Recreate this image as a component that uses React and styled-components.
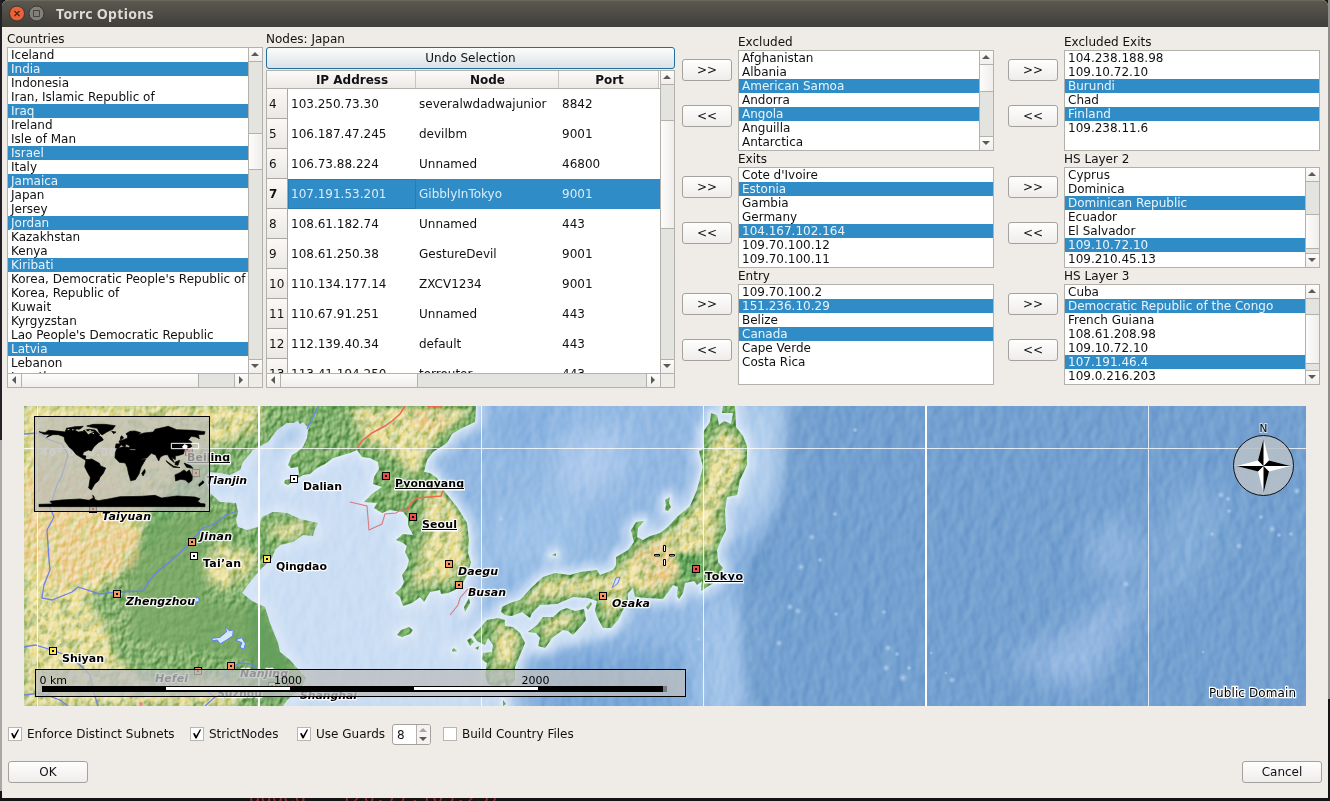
import React from "react";
import styled, { createGlobalStyle, css } from "styled-components";

const Global = createGlobalStyle`
  * { box-sizing: border-box; }
  body { margin: 0; overflow: hidden; background: #17151a; }
`;

const LINE = "#b3b1ac";

const Desktop = styled.div`
  width: 1330px;
  height: 801px;
  overflow: hidden;
  padding: 0 2px;
  font: 12px/14px "DejaVu Sans", sans-serif;
  color: #111;
  background:
    linear-gradient(90deg, #232126 2px, transparent 2px) 0 0 / 1330px 440px no-repeat,
    linear-gradient(90deg, #a8a7a5 2px, transparent 2px, transparent 1328px, #8d8f8b 1328px) 0 0 / 1330px 699px no-repeat,
    linear-gradient(90deg, #a8a7a5 2px, transparent 2px) 0 0 / 1330px 791px no-repeat,
    #151316;
`;

const Window = styled.main`
  height: 798px;
  display: flex;
  flex-direction: column;
  background: #efebe7;
  border-radius: 6px 6px 0 0;
  overflow: hidden;
`;

const Behind = styled.div`
  height: 20px;
  margin: -12px 0 0 247px;
  font: 19px/20px "DejaVu Sans Mono", monospace;
  color: #8e2f2f;
  white-space: pre;
  clip-path: inset(12px 0 0 0);
`;

const TitleBar = styled.header`
  flex: none;
  height: 27px;
  padding-left: 7px;
  display: flex;
  align-items: center;
  gap: 3px;
  background: linear-gradient(#5b5850, #3f3e39);
  border-top: 1px solid #6a675d;
  color: #dfdbd2;
  font: bold 14px/26px "Noto Sans", "Open Sans", sans-serif;
`;

const Title = styled.span`
  padding-left: 8px;
  letter-spacing: 0.3px;
`;

const Top = styled.section`
  flex: none;
  height: 379px;
  padding-left: 5px;
  display: flex;
  align-items: flex-start;
`;

const Column = styled.div`
  width: ${(p) => p.$w}px;
  padding-top: ${(p) => p.$top || 4}px;
  margin-right: ${(p) => p.$gap || 0}px;
  flex: none;
`;

const Label = styled.div`
  height: 16px;
  line-height: 16px;
  white-space: pre;
`;

const Frame = styled.div`
  height: ${(p) => p.$h}px;
  margin-top: ${(p) => p.$mt || 0}px;
  border: 1px solid ${LINE};
  background: #fff;
  display: grid;
  grid-template-columns: minmax(0, 1fr) auto;
  grid-template-rows: minmax(0, 1fr) auto;
  overflow: hidden;
`;

const Items = styled.ul`
  margin: 0;
  padding: 0;
  list-style: none;
  overflow: hidden;
`;

const Item = styled.li`
  height: 14px;
  padding-left: 3px;
  white-space: nowrap;
  ${(p) => p.$on && css`background: #308cc6; color: #e9f3fa;`}
`;

const Bar = styled.div`
  display: flex;
  flex-direction: ${(p) => (p.$h ? "row" : "column")};
  background: #e3e3e0;
  ${(p) => (p.$h
    ? css`height: 14px; border-top: 1px solid ${LINE};`
    : css`width: 14px; border-left: 1px solid ${LINE};`)}
`;

const End = styled.div`
  flex: none;
  width: 13px;
  height: 13px;
  padding: 0 1px 1px 0;
  display: grid;
  place-items: center;
  background: linear-gradient(#fdfcfb, #f1efed);
`;

const Space = styled.div`
  flex: ${(p) => (p.$len === undefined ? "1" : `0 0 ${p.$len}px`)};
`;

const Thumb = styled.div`
  flex: 0 0 ${(p) => p.$len}px;
  background: linear-gradient(${(p) => (p.$h ? "180deg" : "90deg")}, #fdfcfb, #f0eeec);
`;

const Edge = styled.div`
  flex: 0 0 1px;
  background: ${LINE};
`;

const Corner = styled.div`
  border: solid ${LINE};
  border-width: 1px 0 0 1px;
  background: #efebe7;
`;

const Arrow = styled.i`
  width: 0;
  height: 0;
  border: 4px solid transparent;
  ${(p) => ({
    up: css`border-bottom: 4px solid #5c5a57; border-top-width: 0;`,
    down: css`border-top: 4px solid #5c5a57; border-bottom-width: 0;`,
    left: css`border-right: 4px solid #5c5a57; border-left-width: 0;`,
    right: css`border-left: 4px solid #5c5a57; border-right-width: 0;`,
  })[p.$d]}
  ${(p) => p.$faded && css`opacity: 0.5;`}
`;

const Button = styled.button`
  display: block;
  width: ${(p) => p.$w}px;
  height: 22px;
  padding: 0;
  border: 1px solid #a5a29e;
  border-radius: 3px;
  background: linear-gradient(#fefefe, #efedeb);
  color: #111;
  font: 12px/18px "DejaVu Sans", sans-serif;
  ${(p) => p.$focus && css`
    border-color: #216f9e;
    background: linear-gradient(#fbfdfd, #dbe1e4);
  `}
`;

const Movers = styled.div`
  display: flex;
  flex-direction: column;
  gap: 24px;
  margin-bottom: 49px;
`;

const Table = styled.div`
  min-width: 0;
  overflow: hidden;
  display: grid;
  grid-template-columns: 21px 128px 143px 101px;
  grid-template-rows: 18px;
  grid-auto-rows: 30px;
`;

const Head = styled.div`
  display: flex;
  justify-content: center;
  font-weight: bold;
  line-height: 18px;
  border-bottom: 1px solid ${LINE};
  background: linear-gradient(#fdfbfa, #ebe8e5);
  ${(p) => p.$sep && css`box-shadow: inset -1px 0 #c9c6c2;`}
  ${(p) => p.$last && css`box-shadow: inset -1px 0 #fff, inset -2px 0 #c9c6c2;`}
`;

const RowHead = styled.div`
  padding-left: 2px;
  line-height: 30px;
  border: solid #aaa8a4;
  border-width: 0 1px 1px 0;
  background: linear-gradient(#fbf8f6, #eae8e5);
  font-weight: ${(p) => (p.$on ? "bold" : "normal")};
`;

const Cell = styled.div`
  padding-left: 3px;
  line-height: 30px;
  white-space: nowrap;
  ${(p) => p.$on && css`background: #308cc6; color: #d9ecf8;`}
  ${(p) => p.$current && css`box-shadow: inset 0 0 0 1px #2a7cb0;`}
`;

const MapSvg = styled.svg`
  flex: none;
  display: block;
  width: 1282px;
  height: 300px;
  margin-left: 22px;
  font-family: "DejaVu Sans", sans-serif;
`;

const Blended = styled.g`
  mix-blend-mode: ${(p) => p.$mode};
  opacity: ${(p) => p.$amount};
`;

const Options = styled.section`
  display: flex;
  align-items: center;
  height: 21px;
  margin: 18px 0 0 6px;
`;

const Check = styled.label`
  display: flex;
  align-items: center;
  gap: 5px;
  width: ${(p) => p.$w}px;
  margin-bottom: 1px;
  white-space: nowrap;
`;

const Box = styled.span`
  flex: none;
  width: 14px;
  height: 14px;
  border: 1px solid #b9b6b2;
  background: #fff;
  display: grid;
  place-items: center;
`;

const Spin = styled.div`
  width: 39px;
  height: 21px;
  margin-right: 12px;
  border: 1px solid #a5a29e;
  border-radius: 3px;
  background: #fff;
  overflow: hidden;
  display: flex;
  line-height: 20px;
`;

const SpinValue = styled.span`
  width: 24px;
  padding-left: 4px;
  border-right: 1px solid ${LINE};
`;

const SpinSteps = styled.span`
  flex: 1;
  display: flex;
  flex-direction: column;
  align-items: center;
  justify-content: center;
  gap: 5px;
  padding-right: 1px;
  background: #f5f3f1;
`;

const Footer = styled.footer`
  display: flex;
  justify-content: space-between;
  margin: 16px 6px 0;
`;

function Scroll({ h, before, thumb }) {
  return (
    <Bar $h={h}>
      <End><Arrow $d={h ? "left" : "up"} /></End>
      <Edge />
      {before > 0 && <><Space $len={before} /><Edge /></>}
      <Thumb $h={h} $len={thumb} />
      <Edge />
      <Space />
      <Edge />
      <End><Arrow $d={h ? "right" : "down"} /></End>
    </Bar>
  );
}

function List({ items, on, h = 101, v, hbar }) {
  return (
    <Frame $h={h}>
      <Items>
        {items.map((t, i) => <Item key={i} $on={on.includes(i)}>{t}</Item>)}
      </Items>
      {v ? <Scroll before={v[0]} thumb={v[1]} /> : <span />}
      {hbar && <><Scroll h before={hbar[0]} thumb={hbar[1]} /><Corner /></>}
    </Frame>
  );
}

const countries = [
  "Iceland", "India", "Indonesia", "Iran, Islamic Republic of", "Iraq", "Ireland",
  "Isle of Man", "Israel", "Italy", "Jamaica", "Japan", "Jersey", "Jordan", "Kazakhstan",
  "Kenya", "Kiribati", "Korea, Democratic People's Republic of", "Korea, Republic of",
  "Kuwait", "Kyrgyzstan", "Lao People's Democratic Republic", "Latvia", "Lebanon", "Lesotho",
];

const nodes = [
  [4, "103.250.73.30", "severalwdadwajunior", "8842"],
  [5, "106.187.47.245", "devilbm", "9001"],
  [6, "106.73.88.224", "Unnamed", "46800"],
  [7, "107.191.53.201", "GibblyInTokyo", "9001"],
  [8, "108.61.182.74", "Unnamed", "443"],
  [9, "108.61.250.38", "GestureDevil", "9001"],
  [10, "110.134.177.14", "ZXCV1234", "9001"],
  [11, "110.67.91.251", "Unnamed", "443"],
  [12, "112.139.40.34", "default", "443"],
  [13, "113.41.194.250", "torrouter", "443"],
];

const leftLists = [
  ["Excluded", ["Afghanistan", "Albania", "American Samoa", "Andorra", "Angola", "Anguilla", "Antarctica"], [2, 4], [0, 26]],
  ["Exits", ["Cote d'Ivoire", "Estonia", "Gambia", "Germany", "104.167.102.164", "109.70.100.12", "109.70.100.11"], [1, 4]],
  ["Entry", ["109.70.100.2", "151.236.10.29", "Belize", "Canada", "Cape Verde", "Costa Rica"], [1, 3]],
];

const rightLists = [
  ["Excluded Exits", ["104.238.188.98", "109.10.72.10", "Burundi", "Chad", "Finland", "109.238.11.6"], [2, 4]],
  ["HS Layer 2", ["Cyprus", "Dominica", "Dominican Republic", "Ecuador", "El Salvador", "109.10.72.10", "109.210.45.13"], [2, 5], [32, 33]],
  ["HS Layer 3", ["Cuba", "Democratic Republic of the Congo", "French Guiana", "108.61.208.98", "109.10.72.10", "107.191.46.4", "109.0.216.203"], [1, 5], [15, 48]],
];

function MoverColumn({ gap }) {
  return (
    <Column $w={50} $top={32} $gap={gap}>
      {[0, 1, 2].map((i) => (
        <Movers key={i}>
          <Button $w={50}>&gt;&gt;</Button>
          <Button $w={50}>&lt;&lt;</Button>
        </Movers>
      ))}
    </Column>
  );
}

function ListColumn({ lists, gap }) {
  return (
    <Column $w={256} $top={7} $gap={gap}>
      {lists.map(([name, items, on, v]) => (
        <React.Fragment key={name}>
          <Label>{name}</Label>
          <List items={items} on={on} v={v} />
        </React.Fragment>
      ))}
    </Column>
  );
}

const CHINA = "M24,406L320,406L316,418L308,430L307,438L303,447L297,452L292,455L288,465L291,468L298,467L299,474L296,478L285,480L284,483L288,485L295,480L303,475L310,474L317,468L325,464L333,458L350,453L357,450L362,457L370,458L378,462L379,469L374,477L373,484L382,487L372,494L364,502L377,503L374,508L382,513L390,510L403,512L408,518L408,525L413,535L403,534L396,540L403,543L407,546L405,552L409,560L407,568L402,575L404,582L401,588L395,593L400,597L403,606L412,603L420,597L424,602L430,592L440,590L441,594L448,593L455,590L463,583L468,573L471,562L468,553L469,540L467,523L457,507L445,492L437,478L430,473L424,472L427,460L433,452L447,443L452,434L462,428L475,422L476,406Z";
const BOHAI = "M318,406L308,430L307,438L303,447L297,452L292,455L288,465L291,468L298,467L299,474L296,478L285,480L284,483L288,485L295,480L303,475L310,474L317,468L325,464L333,458L350,453L357,450L362,457L370,458L378,462L379,469L374,477L373,484L382,487L372,494L364,502L377,503L374,508L382,513L390,510L403,512L408,518L408,525L413,535L403,534L396,540L403,543L407,546L405,552L409,560L407,568L402,575L404,582L401,588L395,593L400,597L403,606L412,603L420,597L424,602L430,592L440,590L441,594L448,593L455,590L463,583L468,573L471,562L468,553L469,540L467,523L457,507L445,492L437,478L430,473L424,472L427,460L433,452L447,443L452,434L462,428L475,422L476,406Z";
const MAINLAND = "M24,406L318,406L308,428L303,422L300,424L298,421L293,423L287,423L277,430L268,442L253,450L243,462L240,470L230,475L220,473L208,472L205,480L210,493L220,502L236,503L238,512L236,520L238,527L247,530L258,527L262,517L273,512L287,513L300,519L318,523L315,529L313,536L303,535L293,542L280,545L275,550L272,558L260,570L250,582L242,593L252,601L265,607L270,623L278,643L280,652L290,660L297,668L306,678L300,690L287,700L283,706L24,706Z";
const HONSHU = "M502,607L510,603L520,600L532,587L543,577L555,573L570,575L580,572L597,570L600,575L613,570L616,565L616,557L628,550L634,542L631,530L636,522L644,521L638,528L637,537L643,540L650,536L660,533L668,527L677,517L690,506L697,490L703,467L699,451L704,449L703,432L710,422L711,413L717,415L719,425L724,421L731,424L733,413L722,413L723,406L735,406L736,427L743,436L747,446L747,465L740,480L737,495L727,497L725,510L726,530L721,540L717,550L718,562L723,568L715,582L701,591L702,581L697,585L694,581L685,583L683,593L679,599L677,596L678,587L673,585L663,599L647,598L635,597L633,588L628,593L628,600L623,610L618,620L611,628L603,628L597,617L595,610L597,601L588,598L573,597L557,604L540,605L532,613L530,618L522,612L512,616L505,615L501,612Z";
const ISLANDS = "M528,632L537,625L543,617L553,617L561,610L567,608L575,611L584,609L586,620L582,625L573,635L568,631L563,630L553,637L545,648L538,646L540,638L536,633ZM473,635L480,628L487,620L498,618L505,620L505,626L513,627L520,633L525,643L520,655L515,667L515,680L507,690L505,682L497,688L488,684L485,675L487,663L482,660L483,653L492,652L493,645L488,638L485,645L477,641ZM397,635L401,630L409,627L413,630L410,634L402,637ZM465,612L464,607L469,598L470,603ZM665,510L666,505L665,500L670,497L669,503L671,507L668,511ZM586,607L591,602L592,604L588,610ZM452,650L454,648L457,651L453,652ZM467,640L471,638L474,642L470,646ZM475,648L479,646L478,650ZM503,706L503,700L506,704ZM552,555L556,553L556,556Z";
const RIDGES = "M24,406L262,406L255,430L225,442L200,450L150,510L135,550L118,575L85,600L105,625L115,660L150,685L220,680L245,690L230,706L24,706ZM395,406L470,406L465,415L440,432L425,450L418,475L410,470L390,450L365,440L350,406ZM430,485L445,495L460,515L465,540L466,570L445,580L415,585L420,560L430,530L425,510ZM265,530L300,523L310,527L285,538ZM215,545L258,555L245,575L220,590L200,570ZM512,607L550,580L600,577L620,565L650,545L675,530L700,500L712,450L720,430L735,435L743,455L735,480L720,500L715,530L712,545L690,555L685,565L660,590L630,590L610,620L600,590L540,598ZM500,622L520,635L510,665L500,675L495,640ZM545,620L582,612L565,627L545,640Z";

const WORLD = "M57,95L75,98L85,91L120,94L135,96L140,85L160,88L175,96L195,93L205,104L222,95L245,112L250,120L235,128L222,140L214,153L205,150L190,157L188,166L198,168L196,177L206,181L202,184L186,174L168,163L158,150L148,142L135,124L132,110L115,104L98,104L80,112L90,103L72,103ZM140,85L165,80L190,79L180,87L160,90ZM190,92L205,88L225,90L240,104L228,102L222,93ZM200,78L220,73L255,73L286,77L278,88L262,95L246,105L238,98L232,85L215,82ZM275,94L288,96L281,101ZM198,180L215,177L238,190L242,198L257,204L250,220L240,232L236,242L224,252L214,270L206,264L211,232L203,218L194,200ZM290,147L307,141L325,142L330,150L350,151L362,177L377,178L363,202L357,222L346,239L332,242L326,222L322,203L316,189L298,187L285,173L286,158ZM374,208L376,216L369,228L365,220ZM286,144L288,132L300,131L297,123L310,119L322,115L323,108L318,101L330,94L345,93L362,98L355,104L372,99L400,96L405,88L445,79L470,89L520,91L555,95L553,103L535,104L538,116L528,111L514,109L505,119L516,127L505,138L495,140L493,152L490,162L477,166L466,168L466,179L455,172L463,188L450,177L443,164L432,165L421,171L416,183L407,165L394,160L380,174L360,178L350,156L346,147L325,146L330,138L318,132L315,142L303,134L296,145ZM305,107L311,114L301,120L302,111ZM508,128L516,139L500,149L505,139ZM438,182L460,198L480,203L460,202L443,189ZM466,186L479,181L474,196L465,194ZM492,189L512,197L519,205L500,202ZM465,225L480,218L492,210L500,216L508,210L517,230L516,241L506,249L496,240L482,238L467,243ZM549,242L552,248L538,259L536,254ZM57,320L57,313L97,312L90,304L125,300L180,297L207,301L220,294L218,286L221,288L225,299L235,302L265,297L300,290L365,289L405,286L425,294L470,288L525,291L540,296L533,304L541,310L555,312L555,320Z";

const cities = [
  [189, 452, "Beijing", 187, 461, 43, "", "#ec4d4d", 1],
  [196, 473, "Tianjin", 206, 484, 41, "i", "#ef905e"],
  [93, 509, "Taiyuan", 102, 520, 49, "i", "#ef905e"],
  [294, 479, "Dalian", 303, 490, 39, "", "#fff"],
  [192, 542, "Jinan", 200, 540, 32, "i", "#fa9560"],
  [194, 556, "Tai’an", 203, 567, 38, "", "#fff"],
  [267, 559, "Qingdao", 276, 570, 51, "", "#ffe45a"],
  [117, 594, "Zhengzhou", 126, 605, 69, "i", "#fa9560"],
  [53, 651, "Shiyan", 62, 662, 42, "", "#ffe45a"],
  [198, 671, "Hefei", 155, 682, 33, "i", "#ef905e"],
  [231, 666, "Nanjing", 240, 677, 48, "i", "#fa9560"],
  [272, 686, "Suzhou", 217, 697, 45, "", "#ffe45a"],
  [291, 687, "Shanghai", 300, 699, 57, "i", "#ec4d4d"],
  [386, 476, "Pyongyang", 395, 487, 69, "", "#ec4d4d", 1],
  [413, 517, "Seoul", 422, 528, 35, "", "#ec4d4d", 1],
  [449, 564, "Daegu", 458, 575, 40, "i", "#fa9560"],
  [459, 585, "Busan", 468, 596, 38, "i", "#fa9560"],
  [603, 596, "Osaka", 612, 607, 38, "i", "#fa9560"],
  [696, 569, "Tokyo", 705, 580, 38, "", "#ec4d4d", 1],
];

const seamounts = [
  [790, 607, 4], [798, 611, 4], [835, 514, 3], [812, 537, 4], [801, 567, 4], [779, 643, 4], [836, 614, 3],
  [855, 430, 3], [884, 612, 3], [888, 648, 4], [897, 654, 3], [886, 668, 4], [903, 678, 5], [909, 668, 3],
  [931, 653, 2], [952, 680, 4], [946, 673, 2], [1126, 584, 4], [1221, 495, 4], [1228, 499, 3], [1229, 511, 3],
  [1212, 534, 3], [1239, 546, 4], [1261, 517, 3], [1272, 529, 4], [1279, 535, 3], [1291, 534, 3], [1297, 491, 4],
  [1203, 652, 2], [699, 639, 3], [501, 519, 4], [820, 560, 3],
];

function Marker({ x, y, fill }) {
  return (
    <g shapeRendering="crispEdges">
      <rect x={x - 4} y={y - 4} width="8" height="8" fill="#000" />
      <rect x={x - 3} y={y - 3} width="6" height="6" fill={fill} />
      <rect x={x - 1} y={y - 1} width="2" height="2" fill="#000" />
    </g>
  );
}

function City({ c: [x, y, name, tx, ty, w, style, fill, cap] }) {
  return (
    <g>
      <Marker x={x} y={y} fill={fill} />
      <text x={tx} y={ty} fontSize="11" fontWeight="bold" fontStyle={style ? "italic" : "normal"}
        textLength={w} stroke="#fff" strokeWidth="2.6" strokeOpacity="0.85" strokeLinejoin="round" paintOrder="stroke">
        {name}
      </text>
      {cap && <path d={`M${tx - 1},${ty + 2}h${w + 2}`} stroke="#fff" strokeWidth="3" />}
      {cap && <path d={`M${tx},${ty + 1.5}h${w}`} stroke="#000" strokeWidth="1" />}
    </g>
  );
}

function Atlas() {
  return (
    <MapSvg viewBox="24 406 1282 300">
      <defs>
        <filter id="b2"><feGaussianBlur stdDeviation="1.6" /></filter>
        <filter id="b5" x="-30%" y="-30%" width="160%" height="160%"><feGaussianBlur stdDeviation="5" /></filter>
        <filter id="b16" x="-50%" y="-50%" width="200%" height="200%"><feGaussianBlur stdDeviation="14" /></filter>
        <filter id="patchy" colorInterpolationFilters="sRGB">
          <feGaussianBlur in="SourceGraphic" stdDeviation="4" result="s" />
          <feTurbulence type="fractalNoise" baseFrequency="0.1" numOctaves="4" seed="9" />
          <feColorMatrix values="0 0 0 0 1  0 0 0 0 1  0 0 0 0 1  4 0 0 0 -1.3" result="n" />
          <feComposite in="s" in2="n" operator="in" />
        </filter>
        <filter id="relief" x="0" y="0" width="100%" height="100%" colorInterpolationFilters="sRGB">
          <feTurbulence type="fractalNoise" baseFrequency="0.17 0.13" numOctaves="2" seed="7" />
          <feDiffuseLighting surfaceScale="1.9" lightingColor="#fff"><feDistantLight azimuth="225" elevation="36" /></feDiffuseLighting>
        </filter>
        <filter id="seabed" x="0" y="0" width="100%" height="100%" colorInterpolationFilters="sRGB">
          <feTurbulence type="fractalNoise" baseFrequency="0.09 0.06" numOctaves="2" seed="3" />
          <feDiffuseLighting surfaceScale="1.1" lightingColor="#fff"><feDistantLight azimuth="200" elevation="30" /></feDiffuseLighting>
        </filter>
        <clipPath id="land"><path d={MAINLAND} /><path d={BOHAI} /><path d={HONSHU} /><path d={ISLANDS} /></clipPath>
        <clipPath id="shelf"><path d="M190,406H760V560L745,706H190Z" /></clipPath>
        <radialGradient id="mount"><stop offset="0" stopColor="#c5dcf3" stopOpacity="0.75" /><stop offset="1" stopColor="#a9c8e8" stopOpacity="0" /></radialGradient>
      </defs>

      <rect x="24" y="406" width="1282" height="300" fill="#73a0d0" />
      <g filter="url(#b16)">
        <path d="M200,380H790L785,450L790,500L765,540L740,560L750,620L745,730H200Z" fill="#93b9e3" />
        <path d="M200,440H400L480,590L470,620L520,730H200Z" fill="#cbdef4" />
        <path d="M735,400L790,400L785,480L760,520L730,545Z" fill="#b4d0ee" />
        <path d="M710,600L745,600L750,720H700Z" fill="#a5c6ea" />
        <path d="M545,650L680,650L690,720L530,720Z" fill="#78a6d8" />
        <path d="M490,410L560,400L550,440L500,455Z" fill="#86b0df" />
        <path d="M560,440L625,425L620,480L560,510Z" fill="#aecbed" />
        <path d="M490,520L570,500L590,540L530,570L490,570Z" fill="#9fc3e9" />
        <ellipse cx="1115" cy="550" rx="26" ry="30" fill="#91b5e0" />
        <path d="M1150,590L1085,690L1000,660L1060,640L1110,600Z" fill="#98bae3" />
        <path d="M1180,480L1230,500L1200,580L1150,610L1160,540Z" fill="#84add9" />
      </g>
      <path d="M797,406L793,470L785,510L760,560L748,600L752,660L760,706" fill="none" stroke="#5e8fc2" strokeWidth="11" opacity="0.55" filter="url(#b5)" />
      <g clipPath="url(#shelf)">
        <g fill="#dbe8f8" stroke="#dbe8f8" strokeWidth="15" strokeLinejoin="round" filter="url(#b5)" opacity="0.8">
          <path d={MAINLAND} /><path d={BOHAI} /><path d={HONSHU} /><path d={ISLANDS} />
        </g>
      </g>
      <path d="M490,610L530,620L600,598L625,622L600,640L530,655Z" fill="#d5e5f7" filter="url(#b5)" opacity="0.7" />
      <Blended $mode="overlay" $amount={0.3}>
        <rect x="24" y="406" width="1282" height="300" filter="url(#seabed)" />
      </Blended>
      {seamounts.map(([x, y, r], i) => <circle key={i} cx={x} cy={y} r={r} fill="url(#mount)" />)}
      <g fill="none" stroke="#f4f8fd" strokeWidth="3" opacity="0.6" filter="url(#b2)">
        <path d={HONSHU} /><path d={ISLANDS} /><path d={BOHAI} />
      </g>

      <g clipPath="url(#land)">
        <rect x="24" y="406" width="730" height="300" fill="#76a864" />
        <path d="M130,560L200,530L190,600L180,650L110,640Z" fill="#8bb06f" filter="url(#b16)" />
        <path d={RIDGES} fill="#b2c078" filter="url(#b5)" />
        <path d={RIDGES} fill="#ece09b" filter="url(#patchy)" />
        <path d="M24,406L120,406L130,500L140,550L118,570L60,590L24,580Z" fill="#e9de98" filter="url(#b5)" opacity="0.65" />
        <path d="M24,470L110,480L150,560L120,572L60,590L24,560ZM410,406L450,410L440,432L415,428ZM632,550L665,540L680,575L650,590Z" fill="#ecbf84" filter="url(#patchy)" opacity="0.6" />
        <path d="M225,450L180,500L140,560L150,520L200,460Z" fill="#5f9d5b" filter="url(#b5)" />
        <path d="M675,552L700,555L705,572L685,580L680,568Z" fill="#5c9b55" filter="url(#b2)" />
        <g fill="none" stroke="#5c994f" strokeWidth="5" filter="url(#b2)" opacity="0.8"><path d={HONSHU} /><path d={ISLANDS} /><path d={BOHAI} /></g>
        <Blended $mode="overlay" $amount={0.62}>
          <rect x="24" y="406" width="730" height="300" filter="url(#relief)" />
        </Blended>
        <path d="M150,520L230,512L205,550L205,600L268,612L290,670L200,650L130,640L130,580Z" fill="#76a663" filter="url(#b5)" opacity="0.75" />
        <path d="M250,590L300,680L260,706L250,650Z" fill="#629d5c" filter="url(#b5)" opacity="0.8" />
      </g>

      <g fill="none" stroke="#6b83e8" strokeWidth="1.3">
        <path d="M24,434L38,433L50,440L62,444L68,455L62,475L57,485L52,500L49,505L54,517L47,530L49,560L50,570L44,585L42,598L52,600L72,592L78,587L100,594L117,592L143,591L150,580L157,572L172,560L183,550L192,540L203,528L215,524L226,515L238,511" />
        <path d="M24,647L35,645L52,650L68,656L80,665L90,675L93,690L98,706M24,695L40,693L60,700L68,706" />
        <path d="M307,429L312,420L318,406M222,680L230,668L240,663L253,664L257,671M205,706L215,697L205,690" />
      </g>
      <g transform="translate(20 550) scale(.33333)" fill="#d5e7fa" stroke="#5b7ff0" strokeWidth="3">
        <path d="M575,265L600,262L620,245L615,230L628,242L640,240L638,258L620,270L600,282L592,270L578,272ZM645,270L665,263L676,280L672,298L660,292L666,278ZM525,145L535,142L538,152L528,158Z" />
      </g>
      <path d="M612,588L616,578L620,577L618,583Z" fill="#cfe0fa" stroke="#6b83e8" />
      <g fill="none" stroke="#d97a80" strokeWidth="1.1">
        <path d="M350,502L367,506L369,530L382,524L385,514L396,513L402,509L407,512M450,615L458,605L460,598L467,590L475,587" />
      </g>
      <g fill="none" stroke="#f2684c" strokeWidth="1.5">
        <path d="M407,512L411,503L417,498L441,496L443,490M357,448L362,441L372,433L385,426L392,421L400,414L405,406M427,406L442,407" />
      </g>

      <g fill="none" stroke="#fff" shapeRendering="crispEdges">
        <path d="M37.5,406V706M481.5,406V706M703.5,406V706M1148.5,406V706M24,448.5H1306" strokeOpacity="0.8" />
        <path d="M259,406V706M926,406V706" strokeWidth="2" />
      </g>
      <text x="41" y="456" fontSize="10" fontWeight="bold" fill="#fff" textLength="75">40° 0'00.00</text>

      {cities.map((c) => <City key={c[2]} c={c} />)}
      <circle cx="141" cy="704" r="2" fill="#e98a8a" />

      <rect x="34.5" y="416.5" width="175" height="95" fill="#bcbdb8" fillOpacity="0.75" stroke="#000" />
      <g transform="translate(20 400) scale(.33333)">
        <path d={WORLD} fill="#000" stroke="#000" strokeWidth="2" />
        <path d="M130,88L215,92M205,96L222,101" stroke="#c8c4ae" strokeWidth="3" strokeDasharray="5 8" fill="none" />
        <path d="M454,130H536V146H454Z" fill="none" stroke="#fff" strokeWidth="3" />
        <path d="M486,140L494,132L503,137L500,146H490Z" fill="#fff" />
      </g>

      <rect x="35.5" y="669.5" width="650" height="27" fill="#bdbfbf" fillOpacity="0.78" stroke="#000" />
      <g shapeRendering="crispEdges">
        <rect x="663" y="686" width="4" height="6" fill="#77797a" />
        <rect x="42" y="686" width="621" height="6" fill="#000" />
        <path d="M166,688.5H290M414,688.5H538" stroke="#fff" strokeWidth="3" />
      </g>
      <g fontSize="11">
        <text x="39.5" y="684">0 km</text>
        <text x="274" y="684">1000</text>
        <text x="521.5" y="684">2000</text>
      </g>

      <circle cx="1263.5" cy="465.5" r="30" fill="#b7bfc7" fillOpacity="0.88" stroke="#111" />
      <g transform="translate(1263.5 466)">
        <path d="M0,-27L5.5,-5.5L27,0L5.5,5.5L0,27L-5.5,5.5L-27,0L-5.5,-5.5Z" fill="#fff" />
        <path d="M0,0V-27L-5.5,-5.5ZM0,0H27L5.5,-5.5ZM0,0V27L5.5,5.5ZM0,0H-27L-5.5,5.5Z" fill="#000" />
      </g>
      <text x="1263.5" y="432" fontSize="10.5" textAnchor="middle" stroke="#c9dced" strokeWidth="2" paintOrder="stroke">N</text>
      <g fill="#fff" stroke="#000">
        <path d="M654.5,554.5h5v1.500h-5zM669.500,554.500h5v1.500h-5zM663.500,545.500h2v6h-2zM663.500,559.500h2v6h-2z" />
      </g>
      <text x="1209" y="697" fontSize="12" textLength="87" stroke="#fff" strokeWidth="2.4" paintOrder="stroke">Public Domain</text>
    </MapSvg>
  );
}

function Tick() {
  return (
    <svg width="12" height="12" viewBox="0 0 12 12">
      <path d="M2,5.500L3.600,5L5.200,7.800L8.800,1.500L10.200,1.500L5.600,10.500L4.500,10.500Z" fill="#000" />
    </svg>
  );
}

export default function App() {
  return (
    <Desktop>
      <Global />
      <Window>
        <TitleBar>
          <svg width="36" height="18" viewBox="0 0 36 18">
            <circle cx="8" cy="8.500" r="7.500" fill="#ea6238" stroke="#37352f" />
            <path d="M5.500,6l5,5M10.500,6l-5,5" stroke="#4d2414" strokeWidth="1.200" />
            <circle cx="27.500" cy="8.500" r="7.500" fill="#82807a" stroke="#37352f" />
            <path d="M24.500,5.500h6v6h-6z" fill="none" stroke="#46443e" />
          </svg>
          <Title>Torrc Options</Title>
        </TitleBar>
        <Top>
          <Column $w={256} $gap={3}>
            <Label>Countries</Label>
            <List items={countries} on={[1, 4, 7, 9, 12, 15, 21]} h={341} v={[71, 35]} hbar={[0, 176]} />
          </Column>
          <Column $w={409} $gap={7}>
            <Label>Nodes: Japan</Label>
            <Button $w={409} $focus>Undo Selection</Button>
            <Frame $h={318} $mt={1}>
              <Table>
                <Head />
                <Head $sep>IP Address</Head>
                <Head $sep>Node</Head>
                <Head $last>Port</Head>
                {nodes.map(([n, ip, name, port]) => (
                  <React.Fragment key={n}>
                    <RowHead $on={n === 7}>{n}</RowHead>
                    <Cell $on={n === 7} $current={n === 7}>{ip}</Cell>
                    <Cell $on={n === 7}>{name}</Cell>
                    <Cell $on={n === 7}>{port}</Cell>
                  </React.Fragment>
                ))}
              </Table>
              <Scroll before={35} thumb={107} />
              <Scroll h before={0} thumb={136} />
              <Corner />
            </Frame>
          </Column>
          <MoverColumn gap={6} />
          <ListColumn lists={leftLists} gap={14} />
          <MoverColumn gap={6} />
          <ListColumn lists={rightLists} />
        </Top>
        <Atlas />
        <Options>
          <Check $w={182}><Box><Tick /></Box>Enforce Distinct Subnets</Check>
          <Check $w={107}><Box><Tick /></Box>StrictNodes</Check>
          <Check $w={95}><Box><Tick /></Box>Use Guards</Check>
          <Spin>
            <SpinValue>8</SpinValue>
            <SpinSteps><Arrow $d="up" $faded /><Arrow $d="down" /></SpinSteps>
          </Spin>
          <Check><Box />Build Country Files</Check>
        </Options>
        <Footer>
          <Button $w={80}>OK</Button>
          <Button $w={80}>Cancel</Button>
        </Footer>
      </Window>
      <Behind>{"added   120.77.103.237"}</Behind>
    </Desktop>
  );
}
